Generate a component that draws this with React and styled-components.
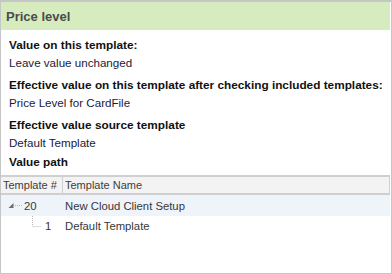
import React from "react";
import styled, { createGlobalStyle } from "styled-components";

const Global = createGlobalStyle`
  html, body { margin: 0; padding: 0; background: #fff; }
  body { font-family: "Liberation Sans", Arial, sans-serif; }
`;

const Frame = styled.div`
  box-sizing: border-box;
  width: 392px;
  height: 274px;
  border: 1px solid #c6c6c6;
  border-top-width: 2px;
  display: flex;
  flex-direction: column;
  background: #fff;
`;

const Header = styled.div`
  height: 28px;
  background: #d6ecbf;
  display: flex;
  align-items: center;
  padding-left: 5px;
  font-size: 13px;
  font-weight: bold;
  color: #4b4b4b;
  margin-right: 1px;
`;

const Body = styled.div`
  padding: 7px 0 0 8px;
  display: flex;
  flex-direction: column;
`;

const Label = styled.div`
  font-size: 11.8px;
  font-weight: bold;
  color: #111;
  height: 17px;
  line-height: 17px;
  white-space: nowrap;
`;

const Value = styled.div`
  font-size: 11.6px;
  color: #1a1a3a;
  height: 17px;
  line-height: 17px;
  margin-bottom: ${(p) => (p.$last ? 3 : 6)}px;
  white-space: nowrap;
`;

const Grid = styled.div`
  margin-top: 4px;
  margin-right: 1px;
  flex: 1;
  display: flex;
  flex-direction: column;
`;

const HeadRow = styled.div`
  display: grid;
  grid-template-columns: 62px 1fr;
  height: 16px;
  background: #f4f3f3;
  border-top: 2px solid #cfcfcf;
  border-bottom: 2px solid #cfcfcf;
  border-right: 1px solid #cfcfcf;
`;

const HeadCell = styled.div`
  font-size: 11px;
  color: #3c3c3c;
  line-height: 16px;
  padding-left: ${(p) => p.$pad || 2}px;
  border-right: ${(p) => (p.$divider ? "1px solid #cfcfcf" : "none")};
  white-space: nowrap;
`;

const Row = styled.div`
  display: grid;
  grid-template-columns: 62px 1fr;
  height: ${(p) => (p.$selected ? 21 : 20)}px;
  background: ${(p) => (p.$selected ? "#eff3fa" : "transparent")};
`;

const Cell = styled.div`
  font-size: 11.3px;
  color: #383838;
  display: flex;
  align-items: center;
  padding-left: ${(p) => p.$pad || 0}px;
  white-space: nowrap;
`;

const Tree = styled.svg`
  flex: none;
  align-self: stretch;
`;

export default function App() {
  return (
    <>
      <Global />
      <Frame>
        <Header>Price level</Header>
        <Body>
          <Label>Value on this template:</Label>
          <Value>Leave value unchanged</Value>
          <Label>Effective value on this template after checking included templates:</Label>
          <Value>Price Level for CardFile</Value>
          <Label>Effective value source template</Label>
          <Value $last>Default Template</Value>
          <Label>Value path</Label>
        </Body>
        <Grid>
          <HeadRow>
            <HeadCell $divider>Template #</HeadCell>
            <HeadCell>Template Name</HeadCell>
          </HeadRow>
          <Row $selected>
            <Cell $pad={7}>
              <Tree width="16" height="21" viewBox="0 0 16 21">
                <polygon points="0.5,13 5.5,8 5.5,13" fill="#6e6e6e" />
                <line x1="7" y1="10.5" x2="14" y2="10.5" stroke="#b4b4b4" strokeDasharray="1 1" />
              </Tree>
              <span>20</span>
            </Cell>
            <Cell $pad={2}>New Cloud Client Setup</Cell>
          </Row>
          <Row>
            <Cell $pad={30}>
              <Tree width="14" height="20" viewBox="0 0 14 20">
                <line x1="1.5" y1="-2" x2="1.5" y2="10" stroke="#b4b4b4" strokeDasharray="1 1" />
                <line x1="1.5" y1="10.5" x2="10" y2="10.5" stroke="#b4b4b4" strokeDasharray="1 1" />
              </Tree>
              <span>1</span>
            </Cell>
            <Cell $pad={2}>Default Template</Cell>
          </Row>
        </Grid>
      </Frame>
    </>
  );
}
